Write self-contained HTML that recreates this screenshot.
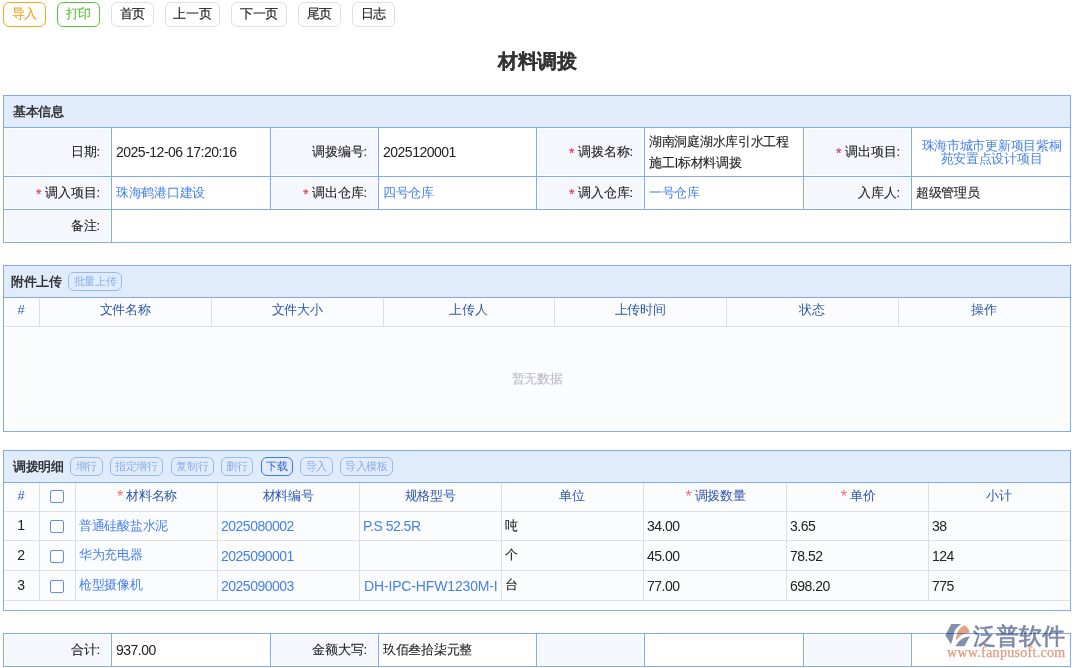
<!DOCTYPE html>
<html><head><meta charset="utf-8"><style>
html,body{margin:0;padding:0;background:#fff;width:1075px;height:668px;overflow:hidden;position:relative}
body div{position:absolute;box-sizing:border-box}
body{font-family:"Liberation Sans",sans-serif;font-size:13px;color:#222222}
.c{font-style:normal;letter-spacing:-0.28px}
.wide .l{letter-spacing:-0.15px !important}
.l{font-weight:normal;font-size:14px;letter-spacing:-0.5px;position:relative;top:1px;-webkit-text-stroke:0}
.t{white-space:nowrap;-webkit-text-stroke:0.1px currentColor}
.btn{border:1px solid;border-radius:6px;text-align:center;line-height:22px;font-size:13px;background:#fff;-webkit-text-stroke:0.15px currentColor}
.sbtn{height:19px;border:1px solid;border-radius:6px;text-align:center;line-height:17px;font-size:11px}
.dis{border-color:#97b8f2;color:#8eaee6}
.act{border-color:#3b78ea;color:#2f62d6}
.req{color:#f0284a;margin-right:4px;font-size:14px;position:relative;top:2px;line-height:0}
.req2{color:#f56a6a;margin-right:3px;font-size:16px;position:relative;top:2px;line-height:0}
.cb{width:14px;height:13px;border:1px solid #5d8ef2;border-radius:2px;background:#fff}
</style></head><body>
<div class="btn" style="left:3px;top:2px;width:43px;height:25px;border-color:#f5a524;color:#f5a524"><i class="c">导入</i></div>
<div class="btn" style="left:57px;top:2px;width:43px;height:25px;border-color:#5cc23a;color:#5cc23a"><i class="c">打印</i></div>
<div class="btn" style="left:111px;top:2px;width:43px;height:25px;border-color:#dcdfe6;color:#222222"><i class="c">首页</i></div>
<div class="btn" style="left:165px;top:2px;width:55px;height:25px;border-color:#dcdfe6;color:#222222"><i class="c">上一页</i></div>
<div class="btn" style="left:231px;top:2px;width:56px;height:25px;border-color:#dcdfe6;color:#222222"><i class="c">下一页</i></div>
<div class="btn" style="left:298px;top:2px;width:43px;height:25px;border-color:#dcdfe6;color:#222222"><i class="c">尾页</i></div>
<div class="btn" style="left:352px;top:2px;width:43px;height:25px;border-color:#dcdfe6;color:#222222"><i class="c">日志</i></div>
<div class="t" style="left:0px;top:48px;width:1075px;height:26px;line-height:26px;text-align:center;font-size:20px;font-weight:bold;color:#333"><i class="c">材料调拨</i></div>
<div style="left:3px;top:95px;width:1068px;height:148px;border:1px solid #7eaaf6;box-sizing:border-box"></div>
<div style="left:4px;top:96px;width:1066px;height:31px;background:#e0ebfc"></div>
<div style="left:3px;top:127px;width:1068px;height:1px;background:#7eaaf6"></div>
<div class="t" style="left:13px;top:96px;width:200px;height:31px;line-height:31px;font-weight:bold;font-size:13px;color:#333;-webkit-text-stroke:0"><i class="c">基本信息</i></div>
<div style="left:3px;top:176px;width:1068px;height:1px;background:#7eaaf6"></div>
<div style="left:3px;top:209px;width:1068px;height:1px;background:#7eaaf6"></div>
<div style="left:5px;top:129px;width:105px;height:46px;background:#f4f8fe"></div>
<div style="left:272px;top:129px;width:105px;height:46px;background:#f4f8fe"></div>
<div style="left:538px;top:129px;width:105px;height:46px;background:#f4f8fe"></div>
<div style="left:805px;top:129px;width:105px;height:46px;background:#f4f8fe"></div>
<div style="left:111px;top:127px;width:1px;height:50px;background:#7eaaf6"></div>
<div style="left:270px;top:127px;width:1px;height:50px;background:#7eaaf6"></div>
<div style="left:378px;top:127px;width:1px;height:50px;background:#7eaaf6"></div>
<div style="left:536px;top:127px;width:1px;height:50px;background:#7eaaf6"></div>
<div style="left:644px;top:127px;width:1px;height:50px;background:#7eaaf6"></div>
<div style="left:803px;top:127px;width:1px;height:50px;background:#7eaaf6"></div>
<div style="left:911px;top:127px;width:1px;height:50px;background:#7eaaf6"></div>
<div style="left:5px;top:178px;width:105px;height:30px;background:#f4f8fe"></div>
<div style="left:272px;top:178px;width:105px;height:30px;background:#f4f8fe"></div>
<div style="left:538px;top:178px;width:105px;height:30px;background:#f4f8fe"></div>
<div style="left:805px;top:178px;width:105px;height:30px;background:#f4f8fe"></div>
<div style="left:111px;top:176px;width:1px;height:34px;background:#7eaaf6"></div>
<div style="left:270px;top:176px;width:1px;height:34px;background:#7eaaf6"></div>
<div style="left:378px;top:176px;width:1px;height:34px;background:#7eaaf6"></div>
<div style="left:536px;top:176px;width:1px;height:34px;background:#7eaaf6"></div>
<div style="left:644px;top:176px;width:1px;height:34px;background:#7eaaf6"></div>
<div style="left:803px;top:176px;width:1px;height:34px;background:#7eaaf6"></div>
<div style="left:911px;top:176px;width:1px;height:34px;background:#7eaaf6"></div>
<div style="left:5px;top:211px;width:105px;height:30px;background:#f4f8fe"></div>
<div style="left:111px;top:209px;width:1px;height:34px;background:#7eaaf6"></div>
<div class="t" style="left:3px;top:127px;width:97px;height:49px;line-height:49px;text-align:right;"><i class="c">日期</i>:</div>
<div class="t" style="left:116px;top:127px;width:151px;height:49px;line-height:49px;"><b class="l">2025-12-06 17:20:16</b></div>
<div class="t" style="left:270px;top:127px;width:97px;height:49px;line-height:49px;text-align:right;"><i class="c">调拨编号</i>:</div>
<div class="t" style="left:383px;top:127px;width:150px;height:49px;line-height:49px;"><b class="l">2025120001</b></div>
<div class="t" style="left:536px;top:127px;width:97px;height:49px;line-height:49px;text-align:right;"><span class="req">*</span><i class="c">调拨名称</i>:</div>
<div class="t" style="left:649px;top:132px;width:150px;line-height:20px;"><i class="c">湖南洞庭湖水库引水工程</i><br><i class="c">施工</i><b class="l">I</b><i class="c">标材料调拨</i></div>
<div class="t" style="left:803px;top:127px;width:97px;height:49px;line-height:49px;text-align:right;"><span class="req">*</span><i class="c">调出项目</i>:</div>
<div class="t" style="left:913px;top:139px;width:157px;line-height:13px;text-align:center;color:#4680ee;-webkit-text-stroke:0"><i class="c">珠海市城市更新项目紫桐</i><br><i class="c">苑安置点设计项目</i></div>
<div class="t" style="left:3px;top:176px;width:97px;height:33px;line-height:33px;text-align:right;"><span class="req">*</span><i class="c">调入项目</i>:</div>
<div class="t" style="left:116px;top:176px;width:151px;height:33px;line-height:33px;color:#4680ee;-webkit-text-stroke:0"><i class="c">珠海鹤港口建设</i></div>
<div class="t" style="left:270px;top:176px;width:97px;height:33px;line-height:33px;text-align:right;"><span class="req">*</span><i class="c">调出仓库</i>:</div>
<div class="t" style="left:383px;top:176px;width:150px;height:33px;line-height:33px;color:#4680ee;-webkit-text-stroke:0"><i class="c">四号仓库</i></div>
<div class="t" style="left:536px;top:176px;width:97px;height:33px;line-height:33px;text-align:right;"><span class="req">*</span><i class="c">调入仓库</i>:</div>
<div class="t" style="left:649px;top:176px;width:151px;height:33px;line-height:33px;color:#4680ee;-webkit-text-stroke:0"><i class="c">一号仓库</i></div>
<div class="t" style="left:803px;top:176px;width:97px;height:33px;line-height:33px;text-align:right;"><i class="c">入库人</i>:</div>
<div class="t" style="left:916px;top:176px;width:151px;height:33px;line-height:33px;"><i class="c">超级管理员</i></div>
<div class="t" style="left:3px;top:209px;width:97px;height:33px;line-height:33px;text-align:right;"><i class="c">备注</i>:</div>
<div style="left:3px;top:265px;width:1068px;height:167px;border:1px solid #7eaaf6;box-sizing:border-box"></div>
<div style="left:4px;top:266px;width:1066px;height:31px;background:#e0ebfc"></div>
<div style="left:3px;top:297px;width:1068px;height:1px;background:#7eaaf6"></div>
<div class="t" style="left:11px;top:266px;width:100px;height:31px;line-height:31px;font-weight:bold;font-size:13px;color:#333;-webkit-text-stroke:0"><i class="c">附件上传</i></div>
<div class="sbtn dis" style="left:68px;top:272px;width:54px;height:19px;line-height:17px"><i class="c">批量上传</i></div>
<div style="left:4px;top:298px;width:1066px;height:28px;background:#fbfcfd"></div>
<div style="left:4px;top:326px;width:1066px;height:1px;background:#dfdfe8"></div>
<div style="left:4px;top:327px;width:1066px;height:103px;background:#fbfcfd"></div>
<div class="t" style="left:3px;top:295px;width:36px;height:29px;line-height:29px;text-align:center;color:#2f56ad;-webkit-text-stroke:0">#</div>
<div style="left:39px;top:298px;width:1px;height:28px;background:#dfdfe8"></div>
<div class="t" style="left:39px;top:295px;width:172px;height:29px;line-height:29px;text-align:center;color:#2f56ad;-webkit-text-stroke:0"><i class="c">文件名称</i></div>
<div style="left:211px;top:298px;width:1px;height:28px;background:#dfdfe8"></div>
<div class="t" style="left:211px;top:295px;width:172px;height:29px;line-height:29px;text-align:center;color:#2f56ad;-webkit-text-stroke:0"><i class="c">文件大小</i></div>
<div style="left:383px;top:298px;width:1px;height:28px;background:#dfdfe8"></div>
<div class="t" style="left:383px;top:295px;width:171px;height:29px;line-height:29px;text-align:center;color:#2f56ad;-webkit-text-stroke:0"><i class="c">上传人</i></div>
<div style="left:554px;top:298px;width:1px;height:28px;background:#dfdfe8"></div>
<div class="t" style="left:554px;top:295px;width:172px;height:29px;line-height:29px;text-align:center;color:#2f56ad;-webkit-text-stroke:0"><i class="c">上传时间</i></div>
<div style="left:726px;top:298px;width:1px;height:28px;background:#dfdfe8"></div>
<div class="t" style="left:726px;top:295px;width:172px;height:29px;line-height:29px;text-align:center;color:#2f56ad;-webkit-text-stroke:0"><i class="c">状态</i></div>
<div style="left:898px;top:298px;width:1px;height:28px;background:#dfdfe8"></div>
<div class="t" style="left:898px;top:295px;width:172px;height:29px;line-height:29px;text-align:center;color:#2f56ad;-webkit-text-stroke:0"><i class="c">操作</i></div>
<div class="t" style="left:3px;top:365px;width:1068px;height:28px;line-height:28px;text-align:center;color:#b6bbc8"><i class="c">暂无数据</i></div>
<div style="left:3px;top:450px;width:1068px;height:161px;border:1px solid #7eaaf6;box-sizing:border-box"></div>
<div style="left:4px;top:451px;width:1066px;height:31px;background:#e0ebfc"></div>
<div style="left:3px;top:482px;width:1068px;height:1px;background:#7eaaf6"></div>
<div class="t" style="left:13px;top:451px;width:100px;height:31px;line-height:31px;font-weight:bold;font-size:13px;color:#333;-webkit-text-stroke:0"><i class="c">调拨明细</i></div>
<div class="sbtn dis" style="left:70px;top:457px;width:33px;"><i class="c">增行</i></div>
<div class="sbtn dis" style="left:110px;top:457px;width:53px;"><i class="c">指定增行</i></div>
<div class="sbtn dis" style="left:171px;top:457px;width:43px;"><i class="c">复制行</i></div>
<div class="sbtn dis" style="left:221px;top:457px;width:32px;"><i class="c">删行</i></div>
<div class="sbtn act" style="left:261px;top:457px;width:32px;"><i class="c">下载</i></div>
<div class="sbtn dis" style="left:300px;top:457px;width:33px;"><i class="c">导入</i></div>
<div class="sbtn dis" style="left:340px;top:457px;width:53px;"><i class="c">导入模板</i></div>
<div style="left:4px;top:483px;width:1066px;height:127px;background:#fbfcfd"></div>
<div style="left:4px;top:511px;width:1066px;height:1px;background:#dfdfe8"></div>
<div style="left:4px;top:540px;width:1066px;height:1px;background:#dfdfe8"></div>
<div style="left:4px;top:570px;width:1066px;height:1px;background:#dfdfe8"></div>
<div style="left:4px;top:600px;width:1066px;height:1px;background:#dfdfe8"></div>
<div style="left:39px;top:483px;width:1px;height:117px;background:#dfdfe8"></div>
<div style="left:75px;top:483px;width:1px;height:117px;background:#dfdfe8"></div>
<div style="left:217px;top:483px;width:1px;height:117px;background:#dfdfe8"></div>
<div style="left:359px;top:483px;width:1px;height:117px;background:#dfdfe8"></div>
<div style="left:501px;top:483px;width:1px;height:117px;background:#dfdfe8"></div>
<div style="left:643px;top:483px;width:1px;height:117px;background:#dfdfe8"></div>
<div style="left:786px;top:483px;width:1px;height:117px;background:#dfdfe8"></div>
<div style="left:928px;top:483px;width:1px;height:117px;background:#dfdfe8"></div>
<div class="t" style="left:3px;top:481px;width:36px;height:29px;line-height:29px;text-align:center;color:#2f56ad;-webkit-text-stroke:0;">#</div>
<div class="t" style="left:75px;top:481px;width:142px;height:29px;line-height:29px;text-align:center;color:#2f56ad;-webkit-text-stroke:0;padding-left:2px;"><span class="req2">*</span><i class="c">材料名称</i></div>
<div class="t" style="left:217px;top:481px;width:142px;height:29px;line-height:29px;text-align:center;color:#2f56ad;-webkit-text-stroke:0;"><i class="c">材料编号</i></div>
<div class="t" style="left:359px;top:481px;width:142px;height:29px;line-height:29px;text-align:center;color:#2f56ad;-webkit-text-stroke:0;"><i class="c">规格型号</i></div>
<div class="t" style="left:501px;top:481px;width:142px;height:29px;line-height:29px;text-align:center;color:#2f56ad;-webkit-text-stroke:0;"><i class="c">单位</i></div>
<div class="t" style="left:643px;top:481px;width:143px;height:29px;line-height:29px;text-align:center;color:#2f56ad;-webkit-text-stroke:0;padding-left:2px;"><span class="req2">*</span><i class="c">调拨数量</i></div>
<div class="t" style="left:786px;top:481px;width:142px;height:29px;line-height:29px;text-align:center;color:#2f56ad;-webkit-text-stroke:0;padding-left:2px;"><span class="req2">*</span><i class="c">单价</i></div>
<div class="t" style="left:928px;top:481px;width:142px;height:29px;line-height:29px;text-align:center;color:#2f56ad;-webkit-text-stroke:0;"><i class="c">小计</i></div>
<div class="cb" style="left:50px;top:490px"></div>
<div class="t" style="left:3px;top:510px;width:36px;height:29px;line-height:29px;text-align:center"><b class="l">1</b></div>
<div class="cb" style="left:50px;top:520px"></div>
<div class="t" style="left:79px;top:511px;width:134px;height:29px;line-height:29px;color:#4680ee;-webkit-text-stroke:0;overflow:hidden;white-space:nowrap"><i class="c">普通硅酸盐水泥</i></div>
<div class="t" style="left:221px;top:511px;width:134px;height:29px;line-height:29px;color:#4680ee;-webkit-text-stroke:0;overflow:hidden;white-space:nowrap"><b class="l">2025080002</b></div>
<div class="t" style="left:363px;top:511px;width:134px;height:29px;line-height:29px;color:#4680ee;-webkit-text-stroke:0;overflow:hidden;white-space:nowrap"><b class="l">P.S 52.5R</b></div>
<div class="t" style="left:505px;top:511px;width:134px;height:29px;line-height:29px;;overflow:hidden;white-space:nowrap"><i class="c">吨</i></div>
<div class="t" style="left:647px;top:511px;width:135px;height:29px;line-height:29px;;overflow:hidden;white-space:nowrap"><b class="l">34.00</b></div>
<div class="t" style="left:790px;top:511px;width:134px;height:29px;line-height:29px;;overflow:hidden;white-space:nowrap"><b class="l">3.65</b></div>
<div class="t" style="left:932px;top:511px;width:134px;height:29px;line-height:29px;;overflow:hidden;white-space:nowrap"><b class="l">38</b></div>
<div class="t" style="left:3px;top:539px;width:36px;height:30px;line-height:30px;text-align:center"><b class="l">2</b></div>
<div class="cb" style="left:50px;top:550px"></div>
<div class="t" style="left:79px;top:540px;width:134px;height:30px;line-height:30px;color:#4680ee;-webkit-text-stroke:0;overflow:hidden;white-space:nowrap"><i class="c">华为充电器</i></div>
<div class="t" style="left:221px;top:540px;width:134px;height:30px;line-height:30px;color:#4680ee;-webkit-text-stroke:0;overflow:hidden;white-space:nowrap"><b class="l">2025090001</b></div>
<div class="t" style="left:363px;top:540px;width:134px;height:30px;line-height:30px;color:#4680ee;-webkit-text-stroke:0;overflow:hidden;white-space:nowrap"></div>
<div class="t" style="left:505px;top:540px;width:134px;height:30px;line-height:30px;;overflow:hidden;white-space:nowrap"><i class="c">个</i></div>
<div class="t" style="left:647px;top:540px;width:135px;height:30px;line-height:30px;;overflow:hidden;white-space:nowrap"><b class="l">45.00</b></div>
<div class="t" style="left:790px;top:540px;width:134px;height:30px;line-height:30px;;overflow:hidden;white-space:nowrap"><b class="l">78.52</b></div>
<div class="t" style="left:932px;top:540px;width:134px;height:30px;line-height:30px;;overflow:hidden;white-space:nowrap"><b class="l">124</b></div>
<div class="t" style="left:3px;top:569px;width:36px;height:30px;line-height:30px;text-align:center"><b class="l">3</b></div>
<div class="cb" style="left:50px;top:580px"></div>
<div class="t" style="left:79px;top:570px;width:134px;height:30px;line-height:30px;color:#4680ee;-webkit-text-stroke:0;overflow:hidden;white-space:nowrap"><i class="c">枪型摄像机</i></div>
<div class="t" style="left:221px;top:570px;width:134px;height:30px;line-height:30px;color:#4680ee;-webkit-text-stroke:0;overflow:hidden;white-space:nowrap"><b class="l">2025090003</b></div>
<div class="t" style="left:364px;top:570px;width:133px;height:30px;line-height:30px;color:#4680ee;-webkit-text-stroke:0;overflow:hidden;white-space:nowrap"><span class="wide"><b class="l">DH-IPC-HFW1230M-I1</b></span></div>
<div class="t" style="left:505px;top:570px;width:134px;height:30px;line-height:30px;;overflow:hidden;white-space:nowrap"><i class="c">台</i></div>
<div class="t" style="left:647px;top:570px;width:135px;height:30px;line-height:30px;;overflow:hidden;white-space:nowrap"><b class="l">77.00</b></div>
<div class="t" style="left:790px;top:570px;width:134px;height:30px;line-height:30px;;overflow:hidden;white-space:nowrap"><b class="l">698.20</b></div>
<div class="t" style="left:932px;top:570px;width:134px;height:30px;line-height:30px;;overflow:hidden;white-space:nowrap"><b class="l">775</b></div>
<div style="left:3px;top:633px;width:1068px;height:34px;border:1px solid #7eaaf6;box-sizing:border-box"></div>
<div style="left:5px;top:635px;width:105px;height:30px;background:#f4f8fe"></div>
<div style="left:272px;top:635px;width:105px;height:30px;background:#f4f8fe"></div>
<div style="left:538px;top:635px;width:105px;height:30px;background:#f4f8fe"></div>
<div style="left:805px;top:635px;width:105px;height:30px;background:#f4f8fe"></div>
<div style="left:111px;top:633px;width:1px;height:34px;background:#7eaaf6"></div>
<div style="left:270px;top:633px;width:1px;height:34px;background:#7eaaf6"></div>
<div style="left:378px;top:633px;width:1px;height:34px;background:#7eaaf6"></div>
<div style="left:536px;top:633px;width:1px;height:34px;background:#7eaaf6"></div>
<div style="left:644px;top:633px;width:1px;height:34px;background:#7eaaf6"></div>
<div style="left:803px;top:633px;width:1px;height:34px;background:#7eaaf6"></div>
<div style="left:911px;top:633px;width:1px;height:34px;background:#7eaaf6"></div>
<div class="t" style="left:3px;top:633px;width:97px;height:33px;line-height:33px;text-align:right;"><i class="c">合计</i>:</div>
<div class="t" style="left:116px;top:633px;width:151px;height:33px;line-height:33px;"><b class="l">937.00</b></div>
<div class="t" style="left:270px;top:633px;width:97px;height:33px;line-height:33px;text-align:right;"><i class="c">金额大写</i>:</div>
<div class="t" style="left:383px;top:633px;width:150px;height:33px;line-height:33px;"><i class="c">玖佰叁拾柒元整</i></div>
<svg style="position:absolute;left:940px;top:618px;mix-blend-mode:multiply" width="135" height="50" viewBox="0 0 135 50">
<path d="M11.3 6 L21.1 6 Q15 10.5 14 15 Q13 21 11 26.3 L5.3 17.2 Z" fill="#8390ab"/>
<path d="M15.8 22.5 Q16 11 24.4 7.2 Q28.5 9.5 29.9 14.4 Q21 15.5 15.8 22.5 Z" fill="#e3a386"/>
<path d="M15.3 28.3 L24.4 28.3 L29.9 18.2 Q20 19 15.3 28.3 Z" fill="#8390ab"/>
<text x="33" y="26" font-size="23" font-family="Liberation Sans, sans-serif" fill="#7d89a6" stroke="#7d89a6" stroke-width="0.7">泛普软件</text>
<text x="7" y="38.5" font-size="14" font-family="Liberation Serif, serif" fill="#dd9b7e" stroke="#dd9b7e" stroke-width="0.25" letter-spacing="0.3">www.fanpusoft.com</text>
</svg>
</body></html>
